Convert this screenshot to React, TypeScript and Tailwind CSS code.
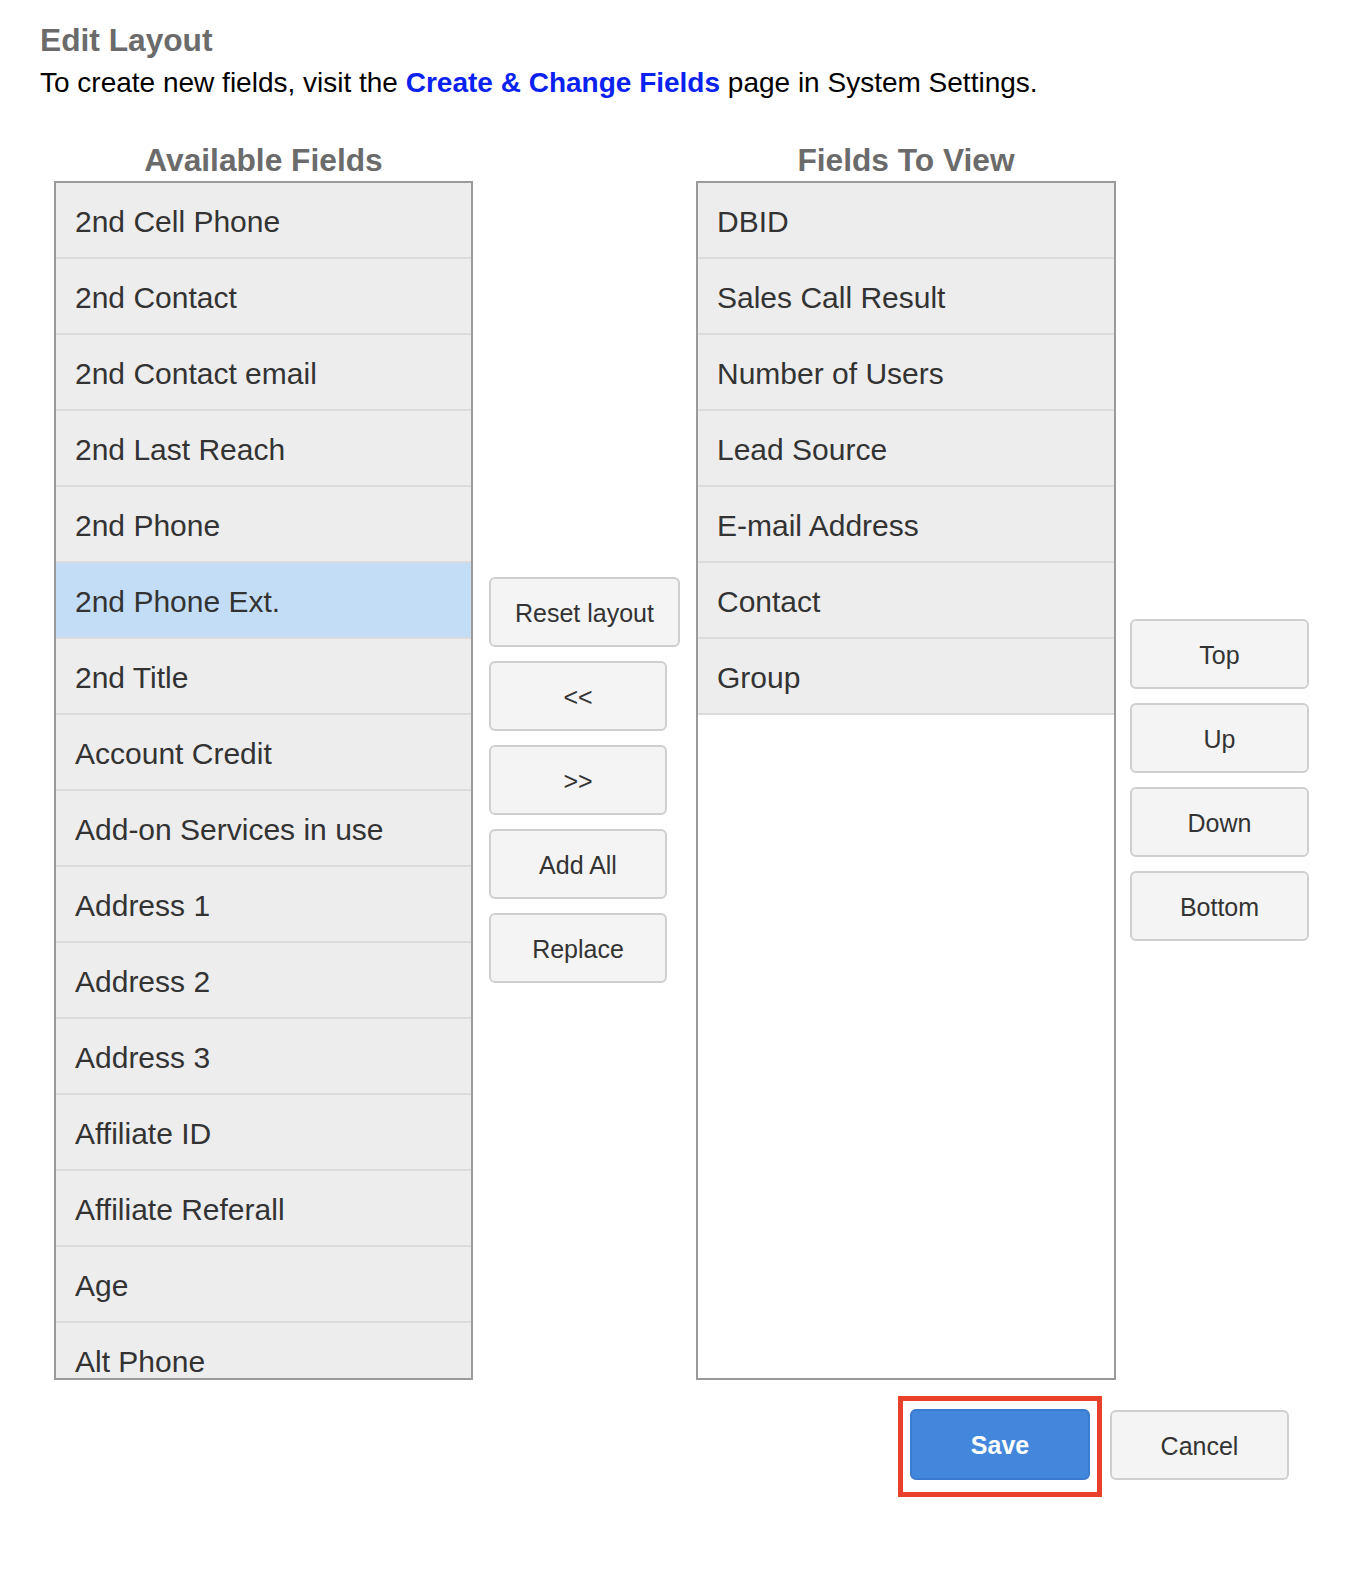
import React from "react";

const available = [
  "2nd Cell Phone",
  "2nd Contact",
  "2nd Contact email",
  "2nd Last Reach",
  "2nd Phone",
  "2nd Phone Ext.",
  "2nd Title",
  "Account Credit",
  "Add-on Services in use",
  "Address 1",
  "Address 2",
  "Address 3",
  "Affiliate ID",
  "Affiliate Referall",
  "Age",
  "Alt Phone",
];

const toView = [
  "DBID",
  "Sales Call Result",
  "Number of Users",
  "Lead Source",
  "E-mail Address",
  "Contact",
  "Group",
];

function Row({ label, selected }: { label: string; selected?: boolean }) {
  return (
    <div
      className={
        "h-[76px] shrink-0 flex items-center pl-[19px] pt-[4px] border-b-2 border-[#dcdcdc] text-[30px] text-[#333333] leading-none whitespace-nowrap " +
        (selected ? "bg-[#c3ddf6]" : "bg-[#ededed]")
      }
    >
      {label}
    </div>
  );
}

function Btn({ children, wide }: { children: React.ReactNode; wide?: boolean }) {
  return (
    <button
      className={
        "h-[70px] px-6 pt-[3px] rounded-[6px] border-2 border-[#cfcfcf] bg-[#f4f4f4] text-[25px] leading-none text-[#333333] flex items-center justify-center whitespace-nowrap " +
        (wide ? "min-w-[179px]" : "min-w-[178px]")
      }
    >
      {children}
    </button>
  );
}

export default function App() {
  return (
    <div
      className="w-[1372px] h-[1572px] bg-white pl-10 pt-[25px]"
      style={{ fontFamily: '"Liberation Sans", Arial, Helvetica, sans-serif' }}
    >
      <h1 className="text-[31.7px] font-bold leading-none text-[#6b6b6b] h-[32px]">Edit Layout</h1>
      <p className="mt-[12px] text-[28px] leading-none text-black whitespace-nowrap">
        To create new fields, visit the{" "}
        <a className="font-bold text-[#0a22f0]">Create &amp; Change Fields</a> page in System Settings.
      </p>

      <div className="ml-[14px] mt-[48px]">
        <div className="flex">
          <div className="w-[419px] text-center text-[31.7px] font-bold leading-none text-[#6b6b6b]">
            Available Fields
          </div>
          <div className="w-[223px]" />
          <div className="w-[420px] text-center text-[31.7px] font-bold leading-none text-[#6b6b6b]">
            Fields To View
          </div>
        </div>

        <div className="flex items-center mt-[4px]">
          <div className="w-[419px] h-[1199px] border-2 border-[#9a9a9a] overflow-hidden flex flex-col bg-white">
            {available.map((f) => (
              <Row key={f} label={f} selected={f === "2nd Phone Ext."} />
            ))}
          </div>

          <div className="w-[223px] pl-4 flex flex-col items-start gap-[14px]">
            <Btn>Reset layout</Btn>
            <Btn>&lt;&lt;</Btn>
            <Btn>&gt;&gt;</Btn>
            <Btn>Add All</Btn>
            <Btn>Replace</Btn>
          </div>

          <div className="w-[420px] h-[1199px] border-2 border-[#9a9a9a] overflow-hidden flex flex-col bg-white">
            {toView.map((f) => (
              <Row key={f} label={f} />
            ))}
          </div>

          <div className="pl-[14px] flex flex-col gap-[14px]">
            <Btn wide>Top</Btn>
            <Btn wide>Up</Btn>
            <Btn wide>Down</Btn>
            <Btn wide>Bottom</Btn>
          </div>
        </div>
      </div>

      <div className="flex items-start ml-[858px] mt-[16px] gap-[8px]">
        <div className="border-[5px] border-[#e8402a] px-[7px] pt-[8px] pb-[12px]">
          <button className="w-[180px] h-[71px] pt-[3px] rounded-[6px] border-2 border-[#3b7bcf] bg-[#4287db] text-white font-bold text-[25px] leading-none flex items-center justify-center">
            Save
          </button>
        </div>
        <button className="mt-[14px] w-[179px] h-[70px] pt-[3px] rounded-[6px] border-2 border-[#cfcfcf] bg-[#f4f4f4] text-[25px] leading-none text-[#333333] flex items-center justify-center">
          Cancel
        </button>
      </div>
    </div>
  );
}
